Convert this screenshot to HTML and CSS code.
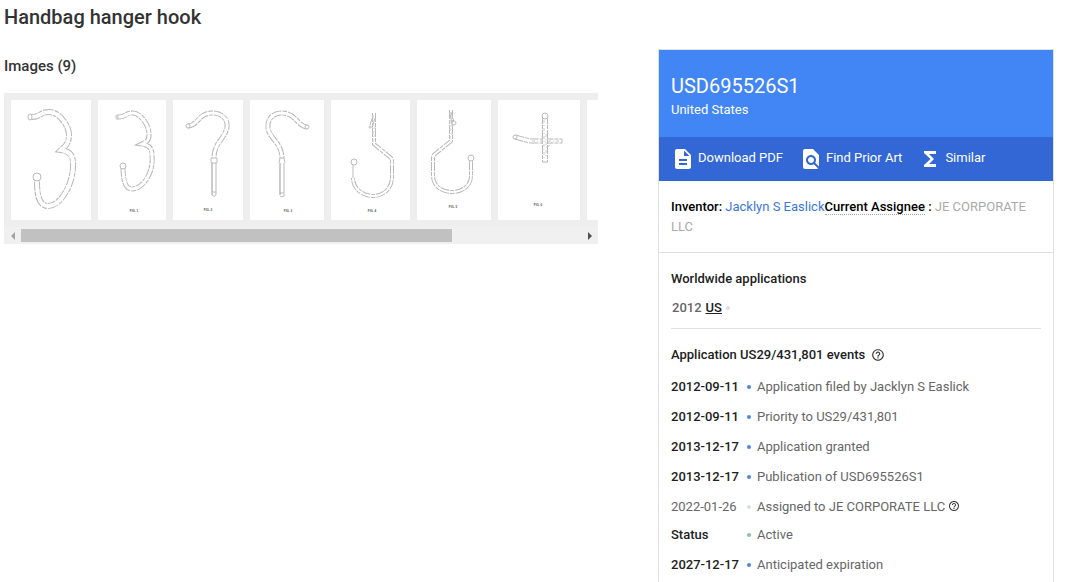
FILE: index.html
```html
<!DOCTYPE html>
<html lang="en">
<head>
    <meta charset="UTF-8">
    <meta name="viewport" content="width=device-width, initial-scale=1.0">
    <title>USD695526S1 - Handbag hanger hook</title>
    <link rel="stylesheet" href="styles.css">
</head>
<body>
    <h1>Handbag hanger hook</h1>

    <div class="layout">
        <main>
            <h2 class="images-title">Images (9)</h2>
            <div class="carousel">
                <div class="thumbs">
                    <svg class="thumb" width="80" height="120" viewBox="0 0 80 120">
                        <defs><path id="fig0" d="M19 17C29 18 29 12 37 12C48 11 58 26 58 35C58 45 53 47 50 50C58 51 62 55 62 63C63 83 50 106 37 106C28 106 26 95 26 82V78"/></defs>
                        <use href="#fig0" class="edge"/>
                        <use href="#fig0" class="core"/>
                        <circle class="ball" cx="26" cy="77" r="4"/>
                        <ellipse class="ball" cx="19" cy="17" rx="2" ry="3"/>
                    </svg>
                    <svg class="thumb" width="68" height="120" viewBox="0 0 68 120">
                        <defs><path id="fig1" d="M19 17C27 18 27 13 34 13C42 12 52 26 51 36C51 41 48 42 44 44C51 45 54 48 54 55C56 74 44 89 34 89C27 89 25 80 25 67"/></defs>
                        <use href="#fig1" class="edge small"/>
                        <use href="#fig1" class="core small"/>
                        <circle class="ball" cx="25" cy="66" r="3"/>
                        <ellipse class="ball" cx="19" cy="17" rx="1" ry="2"/>
                        <text x="36" y="112">FIG. 1</text>
                    </svg>
                    <svg class="thumb" width="70" height="120" viewBox="0 0 70 120">
                        <defs><path id="fig2" d="M15 26C25 26 25 13 39 13C50 13 55 20 54 27C53 38 41 42 41 58"/></defs>
                        <use href="#fig2" class="edge small"/>
                        <use href="#fig2" class="core small"/>
                        <circle class="ball" cx="15" cy="26" r="2"/>
                        <rect class="ball" x="38" y="58" width="6" height="5" rx="1"/>
                        <path class="shaft" d="M39 63V95"/>
                        <path class="line" d="M43 63V95M39 92H43M39 95Q41 98 43 95"/>
                        <text x="35" y="111">FIG. 2</text>
                    </svg>
                    <svg class="thumb" width="74" height="120" viewBox="0 0 74 120">
                        <defs><path id="fig3" d="M57 27C47 26 46 13 32 13C22 13 17 20 18 28C19 38 32 43 32 58"/></defs>
                        <use href="#fig3" class="edge small"/>
                        <use href="#fig3" class="core small"/>
                        <circle class="ball" cx="57" cy="27" r="2"/>
                        <path class="line" d="M29 63L30 58H34L35 63M34 63V96M30 93H34M30 96Q32 98 34 96"/>
                        <path class="shaft" d="M30 63V95"/>
                        <text x="38" y="112">FIG. 3</text>
                    </svg>
                    <svg class="thumb" width="79" height="120" viewBox="0 0 79 120">
                        <defs><path id="fig4" d="M43 13V44L60 58Q61 59 61 61V77C61 89 52 96 42 96C32 96 22 89 22 78"/></defs>
                        <use href="#fig4" class="edge thin"/>
                        <use href="#fig4" class="core thin"/>
                        <path class="line" d="M22 65V78M42 16L39 25M44 18L41 28"/>
                        <path class="grain" d="M42 15V43M44 18V40"/>
                        <circle class="ball" cx="39" cy="27" r="1"/>
                        <circle class="ball" cx="23" cy="62" r="3"/>
                        <text x="41" y="112">FIG. 4</text>
                    </svg>
                    <svg class="thumb" width="74" height="120" viewBox="0 0 74 120">
                        <defs><path id="fig5" d="M34 10V41L18 54Q16 55 16 58V76C16 86 25 92 35 92C45 92 54 86 54 76V61"/></defs>
                        <use href="#fig5" class="edge thin"/>
                        <use href="#fig5" class="core thin"/>
                        <path class="line" d="M34 12L37 22M33 14L35 24"/>
                        <path class="grain" d="M33 12V41M35 16V36"/>
                        <circle class="ball" cx="37" cy="23" r="2"/>
                        <circle class="ball" cx="54" cy="58" r="3"/>
                        <text x="36" y="108">FIG. 5</text>
                    </svg>
                    <svg class="thumb" width="82" height="120" viewBox="0 0 82 120">
                        <defs>
                            <path id="fig6a" d="M17 37L32 41H64"/>
                            <path id="fig6b" d="M47 15V62"/>
                        </defs>
                        <use href="#fig6a" class="edge small"/>
                        <use href="#fig6a" class="core small"/>
                        <use href="#fig6b" class="edge"/>
                        <use href="#fig6b" class="core"/>
                        <path class="grain" d="M46 20V60M48 34V58M34 41H62M50 47L54 42M44 42V34"/>
                        <ellipse class="ball" cx="17" cy="37" rx="2" ry="2"/>
                        <circle class="ball" cx="47" cy="16" r="3"/>
                        <path class="line" d="M44 62H50M64 39V43"/>
                        <text x="40" y="106">FIG. 6</text>
                    </svg>
                    <svg class="thumb" width="88" height="120" viewBox="0 0 88 120"></svg>
                    <svg class="thumb" width="88" height="120" viewBox="0 0 88 120"></svg>
                </div>
                <div class="scrollbar">
                    <button class="scroll-btn prev-btn" id="prevBtn" aria-label="Scroll left"></button>
                    <div class="track"><div class="scroll-thumb"></div></div>
                    <button class="scroll-btn next-btn" id="nextBtn" aria-label="Scroll right"></button>
                </div>
            </div>
        </main>

        <aside class="card">
            <header class="card-header">
                <h2>USD695526S1</h2>
                <p>United States</p>
            </header>

            <nav class="actions">
                <a href="#pdf">
                    <svg width="24" height="24" viewBox="0 0 24 24"><path d="M14 2H6c-1.100 0-1.990.9-1.990 2L4 20c0 1.100.89 2 1.990 2H18c1.100 0 2-.9 2-2V8l-6-6zm2 16H8v-2h8v2zm0-4H8v-2h8v2zm-3-5V3.500L18.500 9H13z"/></svg>
                    <span>Download PDF</span>
                </a>
                <a href="#prior-art">
                    <svg width="24" height="24" viewBox="0 0 24 24"><path d="M20 19.590V8l-6-6H6c-1.100 0-1.990.9-1.990 2L4 20c0 1.100.89 2 1.990 2H18c.45 0 .85-.15 1.190-.4l-4.430-4.430c-.8.520-1.740.830-2.760.830-2.760 0-5-2.240-5-5s2.240-5 5-5 5 2.240 5 5c0 1.020-.31 1.960-.83 2.750L20 19.590zM9 13c0 1.660 1.340 3 3 3s3-1.340 3-3-1.340-3-3-3-3 1.340-3 3z"/></svg>
                    <span>Find Prior Art</span>
                </a>
                <a href="#similar">
                    <svg width="24" height="24" viewBox="0 0 24 24"><path d="M18 4H6v2l6.500 6L6 18v2h12v-3h-7l5-5-5-5h7z"/></svg>
                    <span>Similar</span>
                </a>
            </nav>

            <section class="people">
                <b>Inventor:</b> <a href="#inventor">Jacklyn S Easlick</a><b><span class="dotted">Current Assignee</span> :</b> <span class="assignee">JE CORPORATE LLC</span>
            </section>

            <section class="applications">
                <h3>Worldwide applications</h3>
                <p class="year"><span>2012</span> <a href="#us">US</a><i class="dot"></i></p>
            </section>

            <section class="events">
                <h3>
                    Application US29/431,801 events
                    <svg class="help" width="14" height="14" viewBox="0 0 24 24"><path d="M11 18h2v-2h-2v2zm1-16C6.480 2 2 6.480 2 12s4.480 10 10 10 10-4.480 10-10S17.520 2 12 2zm0 18c-4.410 0-8-3.590-8-8s3.590-8 8-8 8 3.590 8 8-3.590 8-8 8zm0-14c-2.210 0-4 1.790-4 4h2c0-1.100.9-2 2-2s2 .9 2 2c0 2-3 1.750-3 5h2c0-2.250 3-2.500 3-5 0-2.210-1.790-4-4-4z"/></svg>
                </h3>
                <dl>
                    <div class="event blue">
                        <dt>2012-09-11</dt>
                        <dd>Application filed by Jacklyn S Easlick</dd>
                    </div>
                    <div class="event blue">
                        <dt>2012-09-11</dt>
                        <dd>Priority to US29/431,801</dd>
                    </div>
                    <div class="event blue">
                        <dt>2013-12-17</dt>
                        <dd>Application granted</dd>
                    </div>
                    <div class="event blue">
                        <dt>2013-12-17</dt>
                        <dd>Publication of USD695526S1</dd>
                    </div>
                    <div class="event minor">
                        <dt>2022-01-26</dt>
                        <dd>Assigned to JE CORPORATE LLC <svg class="help" width="12" height="12" viewBox="0 0 24 24"><path d="M11 18h2v-2h-2v2zm1-16C6.480 2 2 6.480 2 12s4.480 10 10 10 10-4.480 10-10S17.520 2 12 2zm0 18c-4.410 0-8-3.590-8-8s3.590-8 8-8 8 3.590 8 8-3.590 8-8 8zm0-14c-2.210 0-4 1.790-4 4h2c0-1.100.9-2 2-2s2 .9 2 2c0 2-3 1.750-3 5h2c0-2.250 3-2.500 3-5 0-2.210-1.790-4-4-4z"/></svg></dd>
                    </div>
                    <div class="event green">
                        <dt>Status</dt>
                        <dd>Active</dd>
                    </div>
                    <div class="event blue">
                        <dt>2027-12-17</dt>
                        <dd>Anticipated expiration</dd>
                    </div>
                </dl>
            </section>
        </aside>
    </div>

    <script>
        const thumbs = document.querySelector('.thumbs');

        document.getElementById('prevBtn').addEventListener('click', () => {
            thumbs.scrollLeft -= 80;
        });
        document.getElementById('nextBtn').addEventListener('click', () => {
            thumbs.scrollLeft += 80;
        });
    </script>
</body>
</html>
```

FILE: styles.css
```css
* {
    margin: 0;
    padding: 0;
    box-sizing: border-box;
}

body {
    font-family: Roboto, Arial, sans-serif;
    font-size: 13px;
    line-height: 20px;
    color: #212121;
    background: white;
    padding: 4px 14px 0 4px;
    overflow: hidden;
}

h1 {
    font-size: 20px;
    line-height: 26px;
    font-weight: 500;
    color: #333;
}

h3, b, dt {
    font-size: 13px;
    font-weight: 500;
}

a {
    text-decoration: none;
}

.layout {
    display: grid;
    grid-template-columns: 3fr 2fr;
    gap: 60px;
    padding-top: 19px;
    align-items: start;
}

main {
    min-width: 0;
}

.images-title {
    font-size: 15px;
    line-height: 34px;
    font-weight: 500;
    color: #333;
    margin-bottom: 10px;
}

/* Image carousel */
.carousel {
    background: #eee;
}

.thumbs {
    display: flex;
    gap: 7px;
    padding: 7px;
    overflow: hidden;
}

.thumb {
    flex: none;
    background: white;
    fill: none;
    stroke: #bbb;
}

.edge {
    stroke: #b8b8b8;
    stroke-width: 6;
    stroke-dasharray: 9 1 4 1;
}

.core {
    stroke: white;
    stroke-width: 4;
}

.edge.small {
    stroke-width: 5;
}

.core.small {
    stroke-width: 3;
}

.edge.thin {
    stroke-width: 4;
}

.core.thin {
    stroke-width: 2;
}

.ball {
    fill: white;
}

.shaft {
    stroke: #999;
}

.grain {
    stroke: #ccc;
    stroke-dasharray: 3 2 1 2;
}

.thumb text {
    font: bold 3px "Liberation Sans", sans-serif;
    fill: #555;
    stroke: none;
    text-anchor: middle;
}

.scrollbar {
    display: flex;
    height: 17px;
    background: #f0f0f0;
}

.scroll-btn {
    width: 17px;
    border: none;
    background: none;
    display: flex;
    align-items: center;
    justify-content: center;
    cursor: pointer;
}

.scroll-btn::before {
    content: "";
    border: 4px solid transparent;
}

.prev-btn::before {
    border-left-width: 0;
    border-right-color: #a3a3a3;
}

.next-btn::before {
    border-right-width: 0;
    border-left-color: #505050;
}

.track {
    flex: 1;
    padding: 2px 0;
}

.scroll-thumb {
    width: 77%;
    height: 13px;
    background: #c1c1c1;
}

/* Patent card */
.card {
    border: 1px solid #e0e0e0;
}

.card-header {
    background: #4285f4;
    color: white;
    padding: 23px 12px 17px;
}

.card-header h2 {
    font-size: 20px;
    line-height: 26px;
    font-weight: 400;
    margin-bottom: 1px;
}

.actions {
    display: flex;
    gap: 16px;
    height: 44px;
    padding: 0 12px;
    background: #3367d6;
}

.actions a {
    display: flex;
    align-items: center;
    gap: 3px;
    color: white;
}

.actions span {
    padding-bottom: 2px;
}

.actions svg {
    fill: white;
}

.people {
    padding: 16px 12px 15px;
    color: #000;
    border-bottom: 1px solid #e0e0e0;
}

.people a {
    color: #3c78d8;
}

.dotted {
    border-bottom: 1px dotted #aaa;
}

.assignee {
    color: #aaa;
}

.applications {
    margin: 0 12px;
    padding: 16px 0 10px;
    border-bottom: 1px solid #e0e0e0;
}

.year {
    display: flex;
    align-items: center;
    gap: 4px;
    margin-top: 9px;
    padding-left: 1px;
    color: #666;
    font-weight: 500;
}

.year a {
    color: #212121;
    text-decoration: underline;
}

.dot {
    width: 4px;
    height: 4px;
    border-radius: 50%;
    background: #ddd;
}

.events {
    padding: 16px 12px;
}

.events h3 {
    display: flex;
    align-items: center;
    gap: 6px;
    margin-bottom: 7px;
}

.help {
    fill: #333;
}

.event {
    display: grid;
    grid-template-columns: 76px 1fr;
    line-height: 30px;
}

.event dd {
    display: flex;
    gap: 3px;
    color: #666;
}

.event dd::before {
    content: "";
    width: 4px;
    height: 4px;
    margin: 13px 3px 0 0;
    border-radius: 50%;
    background: #ddd;
}

.event .help {
    margin-top: 8px;
}

.event.blue dd::before {
    background: #4f86e0;
}

.event.green dd::before {
    background: #81c995;
}

.event.minor {
    height: 28px;
}

.event.minor dt {
    font-weight: 400;
    color: #666;
}
```
